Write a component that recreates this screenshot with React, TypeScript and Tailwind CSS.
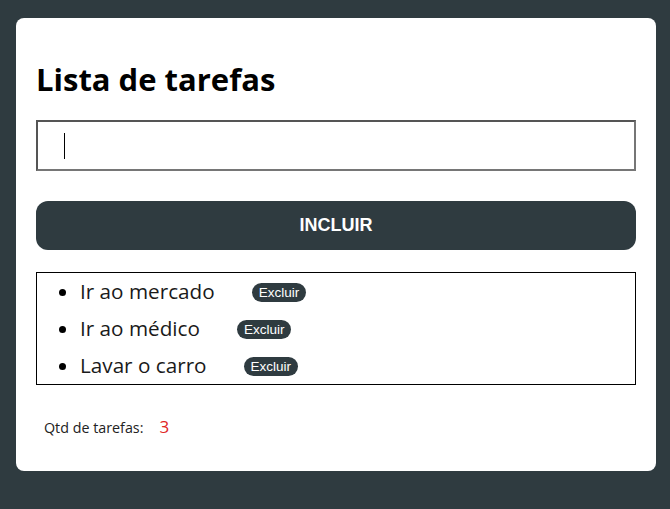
import { useState } from "react";

function App() {
  const [tarefas] = useState(["Ir ao mercado", "Ir ao médico", "Lavar o carro"]);

  return (
    <div className="min-h-[509px] w-full bg-[#2f3b40] pt-[18px] pb-[38px] font-['Open_Sans',sans-serif]">
      <div className="ml-4 w-[640px] h-[453px] rounded-lg bg-white px-5 pt-[39px]">
        {/* Title */}
        <h1 className="text-[31px] font-bold leading-[44px] text-black">Lista de tarefas</h1>

        {/* Input */}
        <div className="mt-[19px] h-[51px] w-full border-2 border-[#767676] border-t-[#555] border-l-[#555] flex items-center pl-[26px]">
          <span className="block w-px h-[26px] bg-black"></span>
        </div>

        {/* Button */}
        <button className="mt-[30px] h-[49px] w-full rounded-xl bg-[#2f3b40] text-white text-[18px] font-bold font-['Liberation_Sans',Arial,sans-serif]">
          INCLUIR
        </button>

        {/* List */}
        <ul className="mt-[22px] border border-black list-disc pl-[43px]">
          {tarefas.map((t) => (
            <li key={t} className="h-[37px] leading-[37px] text-[20.7px] text-[#1a1a1a] marker:text-black">
              <span>{t}</span>
              <button className="ml-[37px] align-middle relative -top-[1px] h-[19px] px-[7px] rounded-full bg-[#2f3b40] text-white text-[13.5px] leading-[19px] font-medium font-['Liberation_Sans',Arial,sans-serif]">
                Excluir
              </button>
            </li>
          ))}
        </ul>

        {/* Footer */}
        <div className="mt-[29px] pl-2 flex items-baseline">
          <span className="text-[14.3px] text-[#222]">Qtd de tarefas:</span>
          <span className="ml-4 text-[17px] text-[#e02424]">{tarefas.length}</span>
        </div>
      </div>
    </div>
  );
}

export default App;
